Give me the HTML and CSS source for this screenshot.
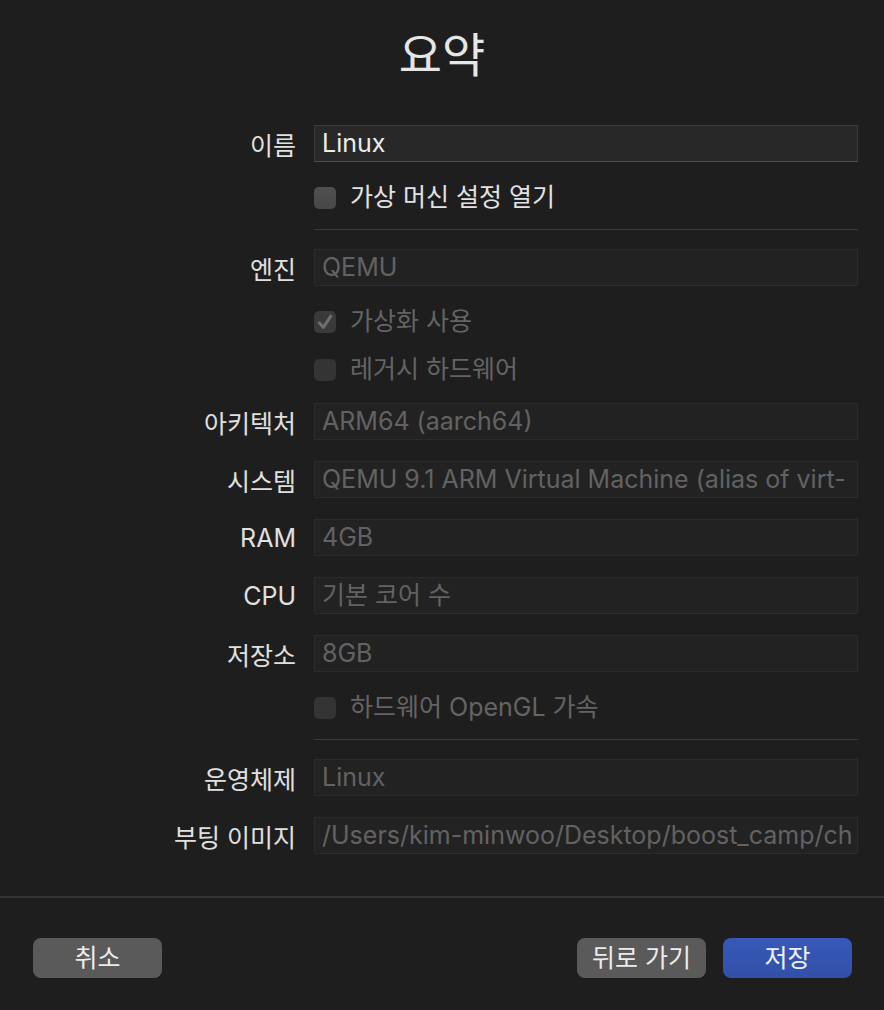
FILE: index.html
```html
<!DOCTYPE html>
<html lang="ko">
<head>
<meta charset="utf-8">
<title>요약</title>
<link rel="stylesheet" href="styles.css">
</head>
<body>
<div class="dialog">
  <h1 class="title">요약</h1>
  <div class="form">
    <div class="row">
      <div class="label">이름</div>
      <div class="field field-edit">Linux</div>
    </div>
    <div class="row row-check">
      <div></div>
      <div class="check"><span class="box"></span><span class="check-text">가상 머신 설정 열기</span></div>
    </div>
    <div class="row row-sep"><div></div><div class="sep"></div></div>
    <div class="row">
      <div class="label">엔진</div>
      <div class="field">QEMU</div>
    </div>
    <div class="row row-check">
      <div></div>
      <div class="check disabled"><span class="box checked"><svg viewBox="0 0 22 22" width="22" height="22"><path d="M5.2 11.8 L9.3 16.4 L16.8 5.2" fill="none" stroke="#6e6e6e" stroke-width="3" stroke-linecap="round" stroke-linejoin="round"/></svg></span><span class="check-text">가상화 사용</span></div>
    </div>
    <div class="row row-check">
      <div></div>
      <div class="check disabled"><span class="box"></span><span class="check-text">레거시 하드웨어</span></div>
    </div>
    <div class="row">
      <div class="label">아키텍처</div>
      <div class="field">ARM64 (aarch64)</div>
    </div>
    <div class="row">
      <div class="label">시스템</div>
      <div class="field">QEMU 9.1 ARM Virtual Machine (alias of virt-</div>
    </div>
    <div class="row">
      <div class="label">RAM</div>
      <div class="field">4GB</div>
    </div>
    <div class="row">
      <div class="label">CPU</div>
      <div class="field">기본 코어 수</div>
    </div>
    <div class="row">
      <div class="label">저장소</div>
      <div class="field">8GB</div>
    </div>
    <div class="row row-check">
      <div></div>
      <div class="check disabled"><span class="box"></span><span class="check-text">하드웨어 OpenGL 가속</span></div>
    </div>
    <div class="row row-sep"><div></div><div class="sep"></div></div>
    <div class="row">
      <div class="label">운영체제</div>
      <div class="field">Linux</div>
    </div>
    <div class="row">
      <div class="label">부팅 이미지</div>
      <div class="field">/Users/kim-minwoo/Desktop/boost_camp/ch</div>
    </div>
  </div>
  <div class="footer-sep"></div>
  <div class="buttons">
    <button class="btn">취소</button>
    <div class="btn-group">
      <button class="btn">뒤로 가기</button>
      <button class="btn btn-primary">저장</button>
    </div>
  </div>
</div>
</body>
</html>
```

FILE: styles.css
```css
html, body {
  margin: 0;
  padding: 0;
  background: #1e1e1e;
}
body {
  font-family: "Inter", "Noto Sans CJK KR", sans-serif;
  color: #e2e2e2;
  width: 884px;
  height: 1010px;
  overflow: hidden;
}
.dialog {
  display: flex;
  flex-direction: column;
  height: 1010px;
}
.title {
  margin: 0;
  height: 125px;
  box-sizing: border-box;
  padding-top: 30px;
  font-size: 47px;
  line-height: 50px;
  font-weight: 400;
  text-align: center;
  color: #e6e6e6;
}
.form {
  display: flex;
  flex-direction: column;
  gap: 21px;
  padding-right: 26px;
}
.row {
  display: grid;
  grid-template-columns: 296px 1fr;
  column-gap: 18px;
  align-items: center;
  height: 37px;
}
.label {
  text-align: right;
  font-size: 25px;
  color: #e0e0e0;
  white-space: nowrap;
}
.field {
  height: 37px;
  box-sizing: border-box;
  border: 1px solid #2b2b2b;
  background: #222222;
  padding-left: 7px;
  font-size: 25px;
  line-height: 35px;
  color: #626262;
  white-space: nowrap;
  overflow: hidden;
}
.field-edit {
  background: #282828;
  border-color: #3c3c3c;
  border-bottom-color: #4e4e4e;
  color: #ececec;
}
.row-check {
  height: 27px;
  align-items: start;
}
.check {
  display: flex;
  align-items: center;
  gap: 14px;
  padding-top: 4px;
  height: 22px;
}
.box {
  width: 22px;
  height: 22px;
  border-radius: 5px;
  background: linear-gradient(#505050, #474747);
  flex: none;
  display: flex;
}
.check-text {
  font-size: 25px;
  line-height: 22px;
  position: relative;
  top: -1px;
  color: #e2e2e2;
  white-space: nowrap;
}
.disabled .box {
  background: #343434;
}
.disabled .box.checked {
  background: #3a3a3a;
}
.disabled .check-text {
  color: #646464;
}
.row-sep {
  height: 1px;
  margin: -2px 0 -2px;
}
.sep {
  height: 1px;
  background: #3a3a3a;
}
.footer-sep {
  margin-top: 42px;
  height: 2px;
  background: #333333;
}
.buttons {
  margin-top: 40px;
  padding: 0 32px 0 33px;
  display: flex;
  justify-content: space-between;
}
.btn-group {
  display: flex;
  gap: 17px;
}
.btn {
  width: 129px;
  height: 40px;
  border: none;
  border-radius: 8px;
  background: #5a5a5a;
  color: #ececec;
  font-family: "Inter", "Noto Sans CJK KR", sans-serif;
  font-size: 25px;
  padding: 0;
  line-height: 40px;
}
.btn-primary {
  background: linear-gradient(#3858b8, #3250a8);
  color: #eef0f8;
}
```
